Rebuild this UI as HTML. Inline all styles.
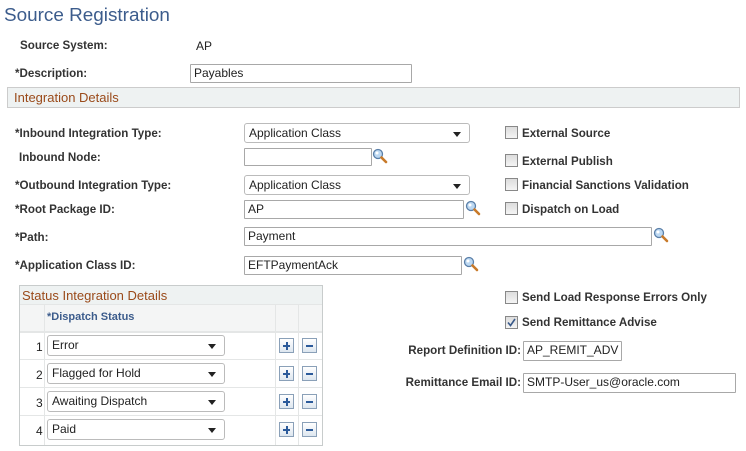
<!DOCTYPE html>
<html><head><style>
body{margin:0;width:746px;height:451px;background:#fff;font-family:"Liberation Sans",Arial,sans-serif;position:relative;overflow:hidden}
.a{position:absolute;white-space:nowrap}
.l{font-size:11.6px;font-weight:bold;color:#333;line-height:14px;margin-top:1px}
.t{font-size:12px;color:#222;line-height:14px;margin-top:1px}
.r{text-align:right;width:200px}
.in{position:absolute;border:1px solid #a8a8a8;background:#fff;font-size:12px;color:#222;line-height:17px;padding-left:3px;box-sizing:border-box;border-radius:1px}
.sel{position:absolute;border:1px solid #bbb;background:#fff;font-size:12px;color:#222;box-sizing:border-box;border-radius:3px;padding-left:4px;line-height:19px}
.sel:after{content:"";position:absolute;right:8px;top:8px;border-left:4px solid transparent;border-right:4px solid transparent;border-top:5px solid #222}
.cb{position:absolute;width:11px;height:11px;border:1px solid #888;background:linear-gradient(#ddd,#f4f4f4);box-sizing:content-box}
.mag{position:absolute;width:16px;height:16px}
.pb{position:absolute;width:15px;height:15px;border:1px solid #8aa0b8;background:linear-gradient(#fff,#dde6ef);box-sizing:border-box}
.pb b{position:absolute;left:3px;top:6px;width:7px;height:2px;background:#2b5a9a}
.pb i{position:absolute;left:5.5px;top:3px;width:2px;height:8px;background:#2b5a9a}
</style></head><body>
<svg width="0" height="0" style="position:absolute"><defs><symbol id="m" viewBox="0 0 16 16"><circle cx="6" cy="6" r="4.5" fill="#bcd8f2" stroke="#5a7fa8" stroke-width="1.3"/><circle cx="5" cy="5" r="1.5" fill="#fff"/><line x1="9.5" y1="9.5" x2="14" y2="14" stroke="#c87a2a" stroke-width="2.6" stroke-linecap="round"/></symbol></defs></svg>

<div class="a" style="left:4px;top:5px;font-size:18.9px;color:#3c5c8c">Source Registration</div>
<div class="a l" style="left:20px;top:38px">Source System:</div>
<div class="a t" style="left:196px;top:38px">AP</div>
<div class="a l" style="left:15px;top:66px">*Description:</div>
<div class="in" style="left:190px;top:64px;width:222px;height:19px">Payables</div>

<div class="a" style="left:7px;top:87px;width:733px;height:21px;background:#eef2f2;border:1px solid #ccc;box-sizing:border-box"></div>
<div class="a" style="left:14px;top:90px;font-size:13px;color:#9a4a1a">Integration Details</div>

<div class="a l" style="left:15px;top:126px">*Inbound Integration Type:</div>
<div class="sel" style="left:244px;top:123px;width:226px;height:20px">Application Class</div>
<div class="a l" style="left:19px;top:150px">Inbound Node:</div>
<div class="in" style="left:244px;top:148px;width:128px;height:18px"></div>
<svg class="mag" style="left:372px;top:148px"><use href="#m"/></svg>
<div class="a l" style="left:15px;top:178px">*Outbound Integration Type:</div>
<div class="sel" style="left:244px;top:175px;width:226px;height:20px">Application Class</div>
<div class="a l" style="left:15px;top:202px">*Root Package ID:</div>
<div class="in" style="left:244px;top:200px;width:220px;height:19px">AP</div>
<svg class="mag" style="left:465px;top:200px"><use href="#m"/></svg>
<div class="a l" style="left:15px;top:230px">*Path:</div>
<div class="in" style="left:244px;top:227px;width:408px;height:19px">Payment</div>
<svg class="mag" style="left:653px;top:227px"><use href="#m"/></svg>
<div class="a l" style="left:15px;top:258px">*Application Class ID:</div>
<div class="in" style="left:244px;top:256px;width:218px;height:19px">EFTPaymentAck</div>
<svg class="mag" style="left:463px;top:256px"><use href="#m"/></svg>

<div class="cb" style="left:505px;top:126px"></div><div class="a l" style="left:522px;top:126px">External Source</div>
<div class="cb" style="left:505px;top:154px"></div><div class="a l" style="left:522px;top:154px">External Publish</div>
<div class="cb" style="left:505px;top:178px"></div><div class="a l" style="left:522px;top:178px">Financial Sanctions Validation</div>
<div class="cb" style="left:505px;top:202px"></div><div class="a l" style="left:522px;top:202px">Dispatch on Load</div>

<!-- grid -->
<div class="a" style="left:19px;top:285px;width:304px;height:161px;border:1px solid #c8cccc;box-sizing:border-box;background:#fff"></div>
<div class="a" style="left:20px;top:286px;width:302px;height:18px;background:#eef2f2"></div>
<div class="a" style="left:22px;top:288px;font-size:13px;color:#9a4a1a">Status Integration Details</div>
<div class="a" style="left:20px;top:304px;width:302px;height:26px;background:#f4f5f5;border-top:1px solid #e4e6e6;border-bottom:2px solid #e4e6e6"></div>
<div class="a" style="left:47px;top:311px;font-size:11px;font-weight:bold;color:#3c5c8c">*Dispatch Status</div>
<div class="a" style="left:44px;top:304px;width:1px;height:141px;background:#e4e6e6"></div>
<div class="a" style="left:275px;top:304px;width:1px;height:141px;background:#e4e6e6"></div>
<div class="a" style="left:298px;top:304px;width:1px;height:141px;background:#e4e6e6"></div>
<div class="a" style="left:20px;top:359px;width:302px;height:1px;background:#e4e6e6"></div>
<div class="a" style="left:20px;top:387px;width:302px;height:1px;background:#e4e6e6"></div>
<div class="a" style="left:20px;top:415px;width:302px;height:1px;background:#e4e6e6"></div>

<div class="a t" style="left:36px;top:339px">1</div>
<div class="sel" style="left:47px;top:335px;width:178px;height:21px">Error</div>
<div class="a t" style="left:36px;top:367px">2</div>
<div class="sel" style="left:47px;top:363px;width:178px;height:21px">Flagged for Hold</div>
<div class="a t" style="left:36px;top:395px">3</div>
<div class="sel" style="left:47px;top:391px;width:178px;height:21px">Awaiting Dispatch</div>
<div class="a t" style="left:36px;top:423px">4</div>
<div class="sel" style="left:47px;top:419px;width:178px;height:21px">Paid</div>

<div class="pb" style="left:279px;top:338px"><b></b><i></i></div><div class="pb" style="left:302px;top:338px"><b></b></div>
<div class="pb" style="left:279px;top:366px"><b></b><i></i></div><div class="pb" style="left:302px;top:366px"><b></b></div>
<div class="pb" style="left:279px;top:394px"><b></b><i></i></div><div class="pb" style="left:302px;top:394px"><b></b></div>
<div class="pb" style="left:279px;top:422px"><b></b><i></i></div><div class="pb" style="left:302px;top:422px"><b></b></div>

<div class="cb" style="left:505px;top:291px"></div><div class="a l" style="left:522px;top:290px">Send Load Response Errors Only</div>
<div class="cb" style="left:505px;top:316px"><svg width="11" height="11" style="position:absolute;left:0;top:0"><path d="M2 5.5 L4.5 8.5 L9 2" stroke="#3a5a8a" stroke-width="1.6" fill="none"/></svg></div><div class="a l" style="left:522px;top:315px">Send Remittance Advise</div>
<div class="a l r" style="left:321px;top:343px">Report Definition ID:</div>
<div class="in" style="left:523px;top:341px;width:99px;height:20px">AP_REMIT_ADV</div>
<div class="a l r" style="left:321px;top:375px">Remittance Email ID:</div>
<div class="in" style="left:523px;top:373px;width:213px;height:20px">SMTP-User_us@oracle.com</div>
</body></html>
